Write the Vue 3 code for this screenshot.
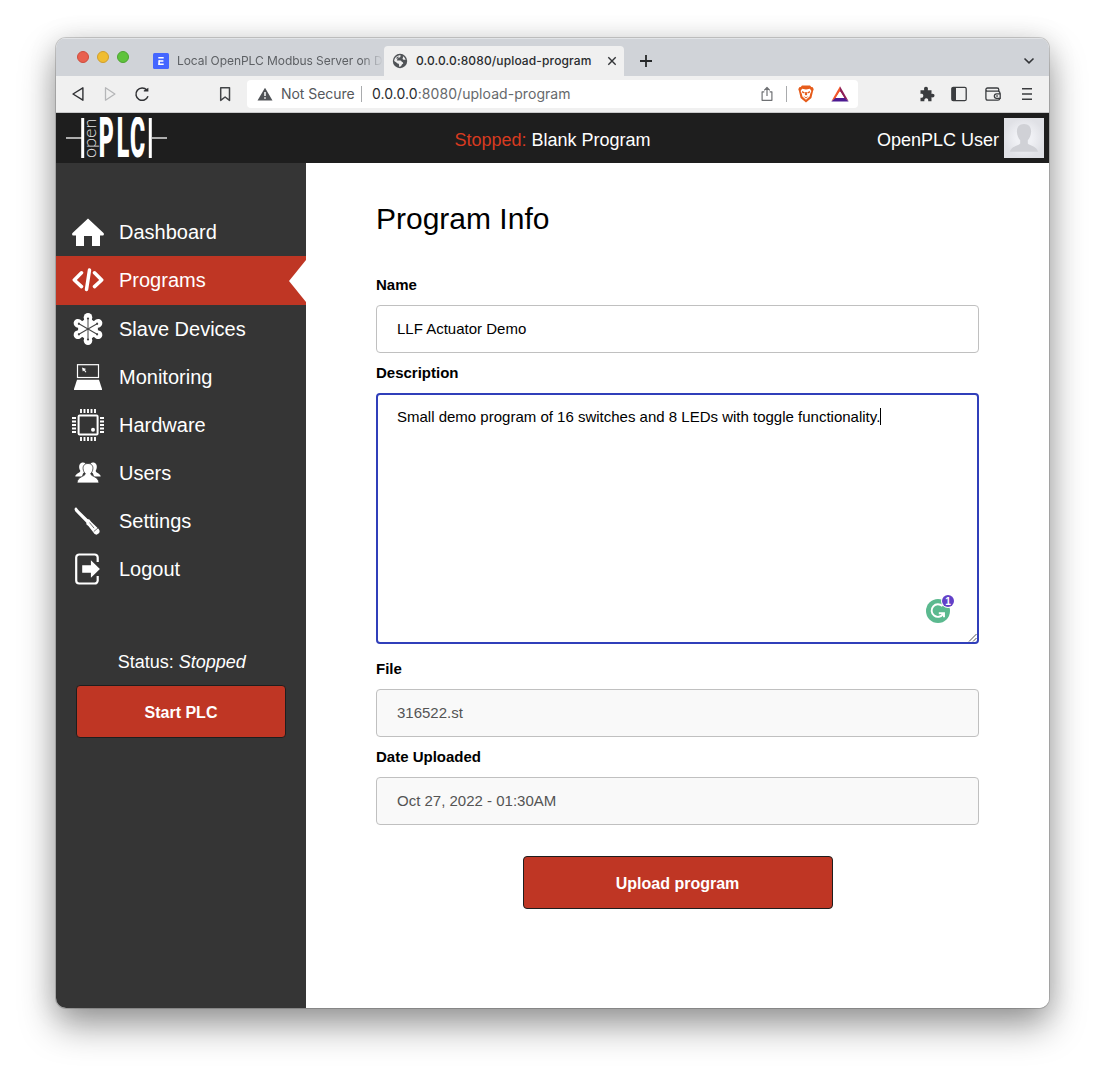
<script setup>
import { ref } from 'vue'

const nav = [
  { label: 'Dashboard', icon: 'home' },
  { label: 'Programs', icon: 'code', active: true },
  { label: 'Slave Devices', icon: 'mesh' },
  { label: 'Monitoring', icon: 'laptop' },
  { label: 'Hardware', icon: 'chip' },
  { label: 'Users', icon: 'users' },
  { label: 'Settings', icon: 'driver' },
  { label: 'Logout', icon: 'logout' }
]
const arms = [0, 60, 120, 180, 240, 300]
const pins = [9, 12.5, 16, 19.5, 23]
const name = ref('LLF Actuator Demo')
const file = ref('316522.st')
const date = ref('Oct 27, 2022 - 01:30AM')
</script>

<template>
  <div class="desktop">
    <div class="window">
      <div class="tabs">
        <div class="lights"><i class="red"></i><i class="yellow"></i><i class="green"></i></div>
        <div class="tab idle">
          <svg class="fav" width="16" height="16" viewBox="0 0 16 16"><rect width="16" height="16" rx="1.5" fill="#4466ff" /><path d="M5.3 4.7h5.4M6 8h4.4M5.300 11.300h5.400" stroke="#fff" stroke-width="1.500" fill="none" /><path d="M6.100 7.300v4.500" stroke="#fff" stroke-width="1.600" /></svg>
          <span class="idle-text">Local OpenPLC Modbus Server on D</span>
        </div>
        <div class="tab current">
          <svg width="16" height="16" viewBox="0 0 16 16"><circle cx="8" cy="8" r="7.200" fill="#505357" /><path d="M8.600 2.200c-.2 1.500 0 2.200-1.400 2.400-1.300.2-.8 1.400-1.900 1.700l-.5 1.200h3.500c1.300 0 1 1.700 2.600 1.700l.3 1.500c-1.200.2-1.500.9-1.700 1.800l-1 .9-1.400.3c0-1.500.2-2.900-1.300-3.100-1.200-.2-1-1.600-2.600-1.900l-1-.7C2.300 4.900 5 2.200 8.600 2.200z" fill="#efefef" /><path d="M10.800 3.200c.9 1.300-.5 1.700-.2 2.700.3 1 1.900.7 3 .8-.4-1.600-1.300-2.800-2.800-3.500z" fill="#efefef" /><path d="M3.800 5.200 6 3.400l.8.4-1.200 2z" fill="#505357" /></svg>
          <span class="current-text">0.0.0.0:8080/upload-program</span>
          <svg class="close" width="10" height="10" viewBox="0 0 10 10"><path d="M1.300 1.300l7.400 7.400M8.700 1.300L1.300 8.700" stroke="#333538" stroke-width="1.400" /></svg>
        </div>
        <svg class="plus" width="14" height="14" viewBox="0 0 14 14"><path d="M7 1v12M1 7h12" stroke="#252729" stroke-width="1.800" /></svg>
        <svg class="chevron" width="12" height="8" viewBox="0 0 12 8"><path d="M1.500 1.500 6 5.800l4.500-4.300" fill="none" stroke="#333538" stroke-width="1.600" /></svg>
      </div>

      <div class="toolbar">
        <svg class="tool back" width="16" height="16" viewBox="0 0 16 16"><path d="M12.900 1.800v12.400L3 8z" fill="none" stroke="#303134" stroke-width="1.400" stroke-linejoin="round" /></svg>
        <svg class="tool next" width="16" height="16" viewBox="0 0 16 16"><path d="M3.500 1.800v12.400L12.900 8z" fill="none" stroke="#b5b6b8" stroke-width="1.300" stroke-linejoin="round" /></svg>
        <svg class="tool reload" width="16" height="16" viewBox="0 0 16 16"><path d="M12.800 4A6.200 6.200 0 1 0 14 10.300" fill="none" stroke="#303134" stroke-width="1.500" /><path d="M9.800 5.600V4.400l4.600-2.600v3.800z" fill="#303134" /></svg>
        <svg class="tool mark" width="16" height="16" viewBox="0 0 16 16"><path d="M3.700 1.700h8.800v12.700L8.100 11l-4.400 3.400z" fill="none" stroke="#424447" stroke-width="1.500" stroke-linejoin="round" /></svg>
        <div class="address">
          <svg width="16" height="14" viewBox="0 0 16 14"><path d="M8 .7 15.500 13.500H.5z" fill="#505357" /><path d="M8 5v4M8 10.300v1.500" stroke="#fff" stroke-width="1.500" /></svg>
          <span class="secure">Not Secure</span>
          <i class="bar"></i>
          <span class="url"><b>0.0.0.0</b>:8080/upload-program</span>
          <svg class="share" width="14" height="16" viewBox="0 0 14 16"><path d="M4.300 5.800H2.100v8.500h9.800V5.800H9.700M7 10V1.800M4.200 4.300 7 1.500l2.800 2.800" fill="none" stroke="#6f7174" stroke-width="1.200" stroke-linejoin="round" /></svg>
          <i class="bar second"></i>
          <svg class="brave" width="16" height="18" viewBox="0 0 16 18"><path d="M4 .6h8l1.300 1.500 1.500.1.900 2-.7 2-1.600 6.700L8 17.500l-5.400-4.600L1 6.200l-.7-2 .9-2 1.500-.1z" fill="#e65c1b" /><path d="M4.100 3.700 8 4.400l3.900-.7 1.500 2.200-1.200 2.800-.6 2.700L8 14.800l-3.600-3.400-.6-2.700L2.600 5.900z" fill="#fff" /><path d="m3.900 6 2.800 1.300-.4 1.200-2.100-.7zM12.100 6 9.300 7.300l.4 1.200 2.100-.7zM7.300 7h1.400l.5 2.800-1.200.6-1.200-.6zM5.300 11 8 12.200l2.700-1.200L8 13.400z" fill="#e65c1b" /></svg>
          <svg class="bat" width="18" height="16" viewBox="0 0 18 16"><path d="M9 .3v5L4.500 12.500.4 15.300z" fill="#f1562b" /><path d="M9 .3v5l4.500 7.200 4.100 2.800z" fill="#8f2057" /><path d="M.3 15.600 4.400 12h9.200l4.100 3.600z" fill="#4c1a91" /><path d="m9 5.200 4.200 6.900H4.800z" fill="#fff" /></svg>
        </div>
        <svg class="puzzle" width="16" height="16" viewBox="0 0 16 16"><path d="M1.500 4.300h3.700C4.600 1.900 5.500.8 7 .8s2.400 1.100 1.800 3.500h3.700v3.600c2-.5 3 .3 3 1.700s-1 2.200-3 1.700v3.900H9.200c.3-2-.5-3-1.900-3s-2.200 1-1.900 3H1.500v-3.500c2 .3 2.800-.6 2.800-2s-.8-2-2.800-1.800z" fill="#3a3c3f" /></svg>
        <svg class="panel" width="16" height="16" viewBox="0 0 16 16"><rect x=".8" y="1.300" width="14.400" height="13.400" rx="1.500" fill="none" stroke="#3a3c3f" stroke-width="1.300" /><path d="M1 1.500h4v13H1z" fill="#3a3c3f" /></svg>
        <svg class="wallet" width="16" height="16" viewBox="0 0 16 16"><path d="M13.800 5V3.700A1.700 1.700 0 0 0 12.100 2H2.500a1.600 1.600 0 0 0 0 3.200H13a1.900 1.900 0 0 1 1.900 1.900v.7M.9 3.600v8.600a1.900 1.900 0 0 0 1.900 1.900h10.100a1.900 1.900 0 0 0 1.900-1.500M15.200 7.800h-3.600a2.200 2.200 0 0 0 0 4.500h3.600zM11.300 10h1.500" fill="none" stroke="#3a3c3f" stroke-width="1.300" /></svg>
        <svg class="menu" width="12" height="14" viewBox="0 0 12 14"><path d="M1 1.700h10M1 7h10M1 12.300h10" stroke="#3a3c3f" stroke-width="1.500" /></svg>
      </div>

      <header>
        <svg class="logo" width="102" height="42" viewBox="0 0 102 42">
          <path d="M0 21h16M86 21h15" stroke="#ddd" stroke-width="1.500" />
          <path d="M16.700 1v40M84.300 1v40" stroke="#fff" stroke-width="3" />
          <text class="open" transform="translate(29.800 41) rotate(-90)" textLength="39.500" lengthAdjust="spacingAndGlyphs">open</text>
          <text class="plc" transform="translate(0 40.300) scale(.42 1)" x="78 121 152.500">PLC</text>
        </svg>
        <div class="program"><span>Stopped:</span> Blank Program</div>
        <div class="user"><span>OpenPLC User</span>
          <svg width="40" height="40" viewBox="0 0 40 40"><defs><radialGradient id="av"><stop offset=".4" stop-color="#f0f1f5" /><stop offset="1" stop-color="#e0e1e6" /></radialGradient></defs><rect width="40" height="40" fill="url(#av)" /><path d="M20 6c5 0 7.300 3.400 7.100 8-.2 3.700-1.700 6.500-3.300 8.300v3.300c1 2 9.500 2.800 10.200 8.200H6c.7-5.400 9.200-6.200 10.200-8.200v-3.300c-1.600-1.800-3.100-4.600-3.300-8.300C12.700 9.400 15 6 20 6z" fill="#d0d1d6" /></svg>
        </div>
      </header>

      <div class="body">
        <aside>
          <nav>
            <a v-for="item in nav" :key="item.label" :class="{ active: item.active }">
              <svg width="32" height="32" viewBox="0 0 32 32" fill="#fff">
                <path v-if="item.icon === 'home'" d="M16 2.500 31.500 17c.9 1.200.2 2.700-1.200 2.600H28V30h-8V20h-8v10H4V19.600H1.700C.3 19.700-.4 18.200.5 17z" />
                <g v-else-if="item.icon === 'code'" fill="none" stroke="#fff" stroke-width="3.500" stroke-linejoin="round" stroke-linecap="round"><path d="M9.500 7.800 2.300 15l7.200 6.600M22.500 7.800l7.200 7.200-7.200 6.600" /><path d="m17.500 5-3 19.500" /></g>
                <g v-else-if="item.icon === 'mesh'">
                  <circle cx="16" cy="16" r="10" />
                  <g v-for="a in arms" :key="a" :transform="`rotate(${a} 16 16)`"><path d="M12.200 5h7.600v8h-7.600z" /><circle cx="16" cy="4.400" r="4.300" /></g>
                  <g v-for="a in arms" :key="'l' + a" :transform="`rotate(${a} 16 16)`"><path d="M16 16V6" stroke="#444" stroke-width="1" /><circle cx="16" cy="5.500" r="1.100" fill="#444" /></g>
                </g>
                <g v-else-if="item.icon === 'laptop'"><rect x="5.500" y="3.700" width="21" height="12.800" fill="none" stroke="#fff" stroke-width="1.200" /><path d="M5 18.800h22l3 9.300v.9H2v-.9z" /><path d="m10 6.500 4.200 1.500-1.400.8 1.600 2.100-.9.700-1.500-2.200-1.200 1z" /></g>
                <g v-else-if="item.icon === 'chip'">
                  <rect x="6.600" y="6.600" width="19" height="19" rx="1" fill="none" stroke="#fff" stroke-width="2" /><circle cx="21" cy="20.800" r="2" />
                  <path v-for="p in pins" :key="p" :d="`M${p} 0v4M${p} 28v4M0 ${p}h4M28 ${p}h4`" stroke="#fff" stroke-width="1.900" />
                </g>
                <g v-else-if="item.icon === 'users'">
                  <path d="M9.500 5.700c3-.8 4.700.5 4.700 4 0 3-1.200 5.300-3.200 6.700l-1 3H3.300c0-3 5.200-3.300 5-5.700-2-3.200-1.200-7.200 1.200-8zM22.500 5.700c-3-.8-4.700.5-4.700 4 0 3 1.200 5.300 3.200 6.700l1 3h6.700c0-3-5.200-3.300-5-5.700 2-3.200 1.200-7.200-1.200-8z" />
                  <path d="M16 6.500c3.700 0 5.200 2.500 4.900 5.300-.2 2-1 3.700-2.200 4.800 0 3 7.900 2.800 8.300 9.400H5c.4-6.600 8.300-6.400 8.300-9.400-1.200-1.100-2-2.800-2.200-4.800C10.800 9 12.300 6.500 16 6.500z" stroke="#353535" stroke-width=".8" />
                </g>
                <g v-else-if="item.icon === 'driver'"><path d="m3 2.800 1.400-.2 2.400 2.900 8.700 8.500 1.900.6 1.700 2.200 7.600 7.200 1 2.100-.5 1.900-2.600 1.700-2-.6-6-7.800-2.100-1.800-.3-1.900-8.300-8.600-2.700-2.800-.7-1.900z" /><path d="m17.500 17.600 4.600 5.600M21.800 26.500l4.200-3.500" stroke="#353535" stroke-width=".7" /></g>
                <g v-else transform="translate(.7)"><path d="M25 9V4.500a3 3 0 0 0-3-3H6.500a3 3 0 0 0-3 3v23a3 3 0 0 0 3 3H22a3 3 0 0 0 3-3V23" fill="none" stroke="#fff" stroke-width="2.200" /><path d="M9.500 12.200h8.700V7.300l9 8.700-9 8.700v-5H9.500z" /></g>
              </svg>
              <span>{{ item.label }}</span>
            </a>
          </nav>
          <p class="status">Status: <i>Stopped</i></p>
          <button class="start">Start PLC</button>
        </aside>

        <main>
          <h1>Program Info</h1>
          <label>Name</label>
          <div class="field">{{ name }}</div>
          <label>Description</label>
          <div class="field area">
            <span>Small demo program of 16 switches and 8 LEDs with toggle functionality.</span><i class="caret"></i>
            <svg class="checker" width="30" height="30" viewBox="0 0 30 30"><circle cx="13" cy="17" r="12" fill="#5bb98f" /><path d="M17.500 12.200A6.300 6.300 0 1 0 18.200 20M13.800 19.300h5.200v4" fill="none" stroke="#fff" stroke-width="1.900" /><circle cx="23" cy="7" r="7" fill="#fff" /><circle cx="23" cy="7" r="6" fill="#6240c8" /><text x="23" y="10.500">1</text></svg>
            <svg class="grip" width="9" height="9" viewBox="0 0 9 9"><path d="M1 8.500 8.500 1M5 8.500 8.500 5" stroke="#555" stroke-width="1" /></svg>
          </div>
          <label class="file-label">File</label>
          <div class="field locked">{{ file }}</div>
          <label>Date Uploaded</label>
          <div class="field locked">{{ date }}</div>
          <button class="upload">Upload program</button>
        </main>
      </div>
    </div>
  </div>
</template>

<style>
body { background: #fff; overflow: hidden; }
</style>

<style scoped>
* { box-sizing: border-box; }
svg { display: block; flex: none; }
.desktop { width: 1105px; height: 1082px; padding: 38px 56px 0; overflow: hidden; font-family: "Liberation Sans", Arial, sans-serif; }
.window { width: 993px; height: 969.5px; display: flex; flex-direction: column; border-radius: 10px; overflow: hidden; box-shadow: 0 0 0 1px rgba(0,0,0,.17), 0 18px 36px rgba(0,0,0,.38), 0 2px 28px rgba(0,0,0,.13); background: #fff; }
.tabs { height: 38px; flex: none; display: flex; background: #d0d3d8; border-top: 1px solid #e2e4e7; font: 12px Inter, sans-serif; }
.lights { display: flex; gap: 8px; padding: 12px 0 0 21px; width: 97px; }
.lights i { width: 12px; height: 12px; border-radius: 50%; border: 1px solid; }
.red { background: #e9604f; border-color: #ce4c3d !important; }
.yellow { background: #f0bd32; border-color: #d09f2c !important; }
.green { background: #5fc33c; border-color: #4da431 !important; }
.tab { display: flex; align-items: center; }
.idle { width: 231px; height: 30px; margin-top: 7px; overflow: hidden; }
.fav { margin-right: 8px; }
.idle-text { width: 206px; overflow: hidden; white-space: nowrap; color: #5d6064; letter-spacing: -.06px; padding-bottom: 2px; -webkit-mask-image: linear-gradient(90deg, #000 184px, transparent 206px); mask-image: linear-gradient(90deg, #000 184px, transparent 206px); }
.current { width: 240px; height: 30px; margin-top: 7px; padding: 0 7px 0 8px; background: #f0f0f0; border-radius: 4px 4px 0 0; }
.current-text { flex: 1; margin-left: 8px; padding-bottom: 2px; color: #292b2e; white-space: nowrap; font-weight: 500; letter-spacing: .13px; }
.close { width: 10px; }
.plus { margin: 15px 0 0 15px; }
.chevron { margin: 18px 14px 0 auto; }
.toolbar { height: 37px; flex: none; display: flex; align-items: center; padding: 0 0 1px 14px; background: #f0f0f0; box-shadow: inset 0 -1px #c9c9ca; }
.next, .reload { margin-left: 16px; }
.mark { margin-left: 67px; }
.address { flex: none; width: 611px; height: 28px; margin-left: 14px; display: flex; align-items: center; border-radius: 4px; background: #fff; padding-left: 10px; font: 14px Inter, sans-serif; color: #66696c; }
.secure { width: 74px; margin-left: 8px; padding-bottom: 1px; color: #55585c; white-space: nowrap; letter-spacing: -.05px; }
.bar { width: 1px; height: 16px; margin-left: 6px; background: #a9abad; }
.url { margin-left: 10px; padding-bottom: 1px; width: 388px; white-space: nowrap; letter-spacing: .06px; }
.url b { font-weight: 400; color: #292b2e; }
.second { margin-left: 12px; }
.brave { margin-left: 11px; }
.bat { margin-left: 17px; }
.puzzle { margin-left: 61px; }
.panel { margin-left: 16px; }
.wallet { margin-left: 18px; }
.menu { margin-left: 20px; }
header { height: 50px; flex: none; display: flex; align-items: center; background: #1e1e1e; color: #fff; font-size: 18px; padding: 0 5px 0 10px; }
.open { font: 300 17px Lato, "Open Sans", sans-serif; fill: #e8e8e8; }
.plc { font: 900 55px Roboto, "Liberation Sans", sans-serif; fill: #fff; }
.program { margin: 4px 0 0 286.500px; }
.program span { color: #d73a20; }
.user { margin-left: auto; display: flex; align-items: center; gap: 5px; }
.user span { margin-top: 4px; }
.body { flex: 1; display: flex; min-height: 0; }
aside { width: 250px; background: #353535; color: #fff; padding-top: 45px; }
nav { display: flex; flex-direction: column; }
nav a { height: 48px; display: flex; align-items: center; gap: 15px; padding-left: 16px; font-size: 20px; color: #fff; }
nav a.active { height: 49px; position: relative; background: #bf3624; }
nav a.active::after { content: ""; position: absolute; right: 0; top: 4px; width: 17px; height: 42px; background: #fff; clip-path: polygon(100% 0, 0 50%, 100% 100%); }
.status { margin: 59px 0 13px; padding-left: 1.500px; text-align: center; font-size: 18px; line-height: 20px; }
button { display: block; height: 53px; padding: 2px 0 0; border: 1px solid #1e1e1e; border-radius: 4px; background: #bf3624; color: #fff; font: bold 16px "Liberation Sans", sans-serif; }
.start { width: 210px; margin-left: 20px; }
main { flex: 1; padding: 39px 70px 0; background: #fff; color: #000; }
h1 { margin: 0 0 40px; font-size: 30px; font-weight: 400; line-height: 34px; }
label { display: block; margin: 11px 0; font-size: 15px; font-weight: bold; line-height: 18px; }
.field { height: 48px; border: 1px solid #c0c0c0; border-radius: 4px; padding: 0 20px; font-size: 15px; line-height: 46px; white-space: nowrap; }
.locked { background: #f9f9f9; color: #545454; }
.area { height: 251px; position: relative; border: 2px solid #303fba; padding: 0 19px; line-height: 44px; }
.caret { display: inline-block; width: 1px; height: 17px; background: #000; vertical-align: -3px; }
.checker { position: absolute; right: 22px; bottom: 18px; }
.checker text { font: bold 10px "Liberation Sans", sans-serif; fill: #fff; text-anchor: middle; }
.grip { position: absolute; right: 0; bottom: 0; }
.file-label { margin-top: 16px; }
.upload { width: 310px; margin: 31px auto 0; }
</style>
